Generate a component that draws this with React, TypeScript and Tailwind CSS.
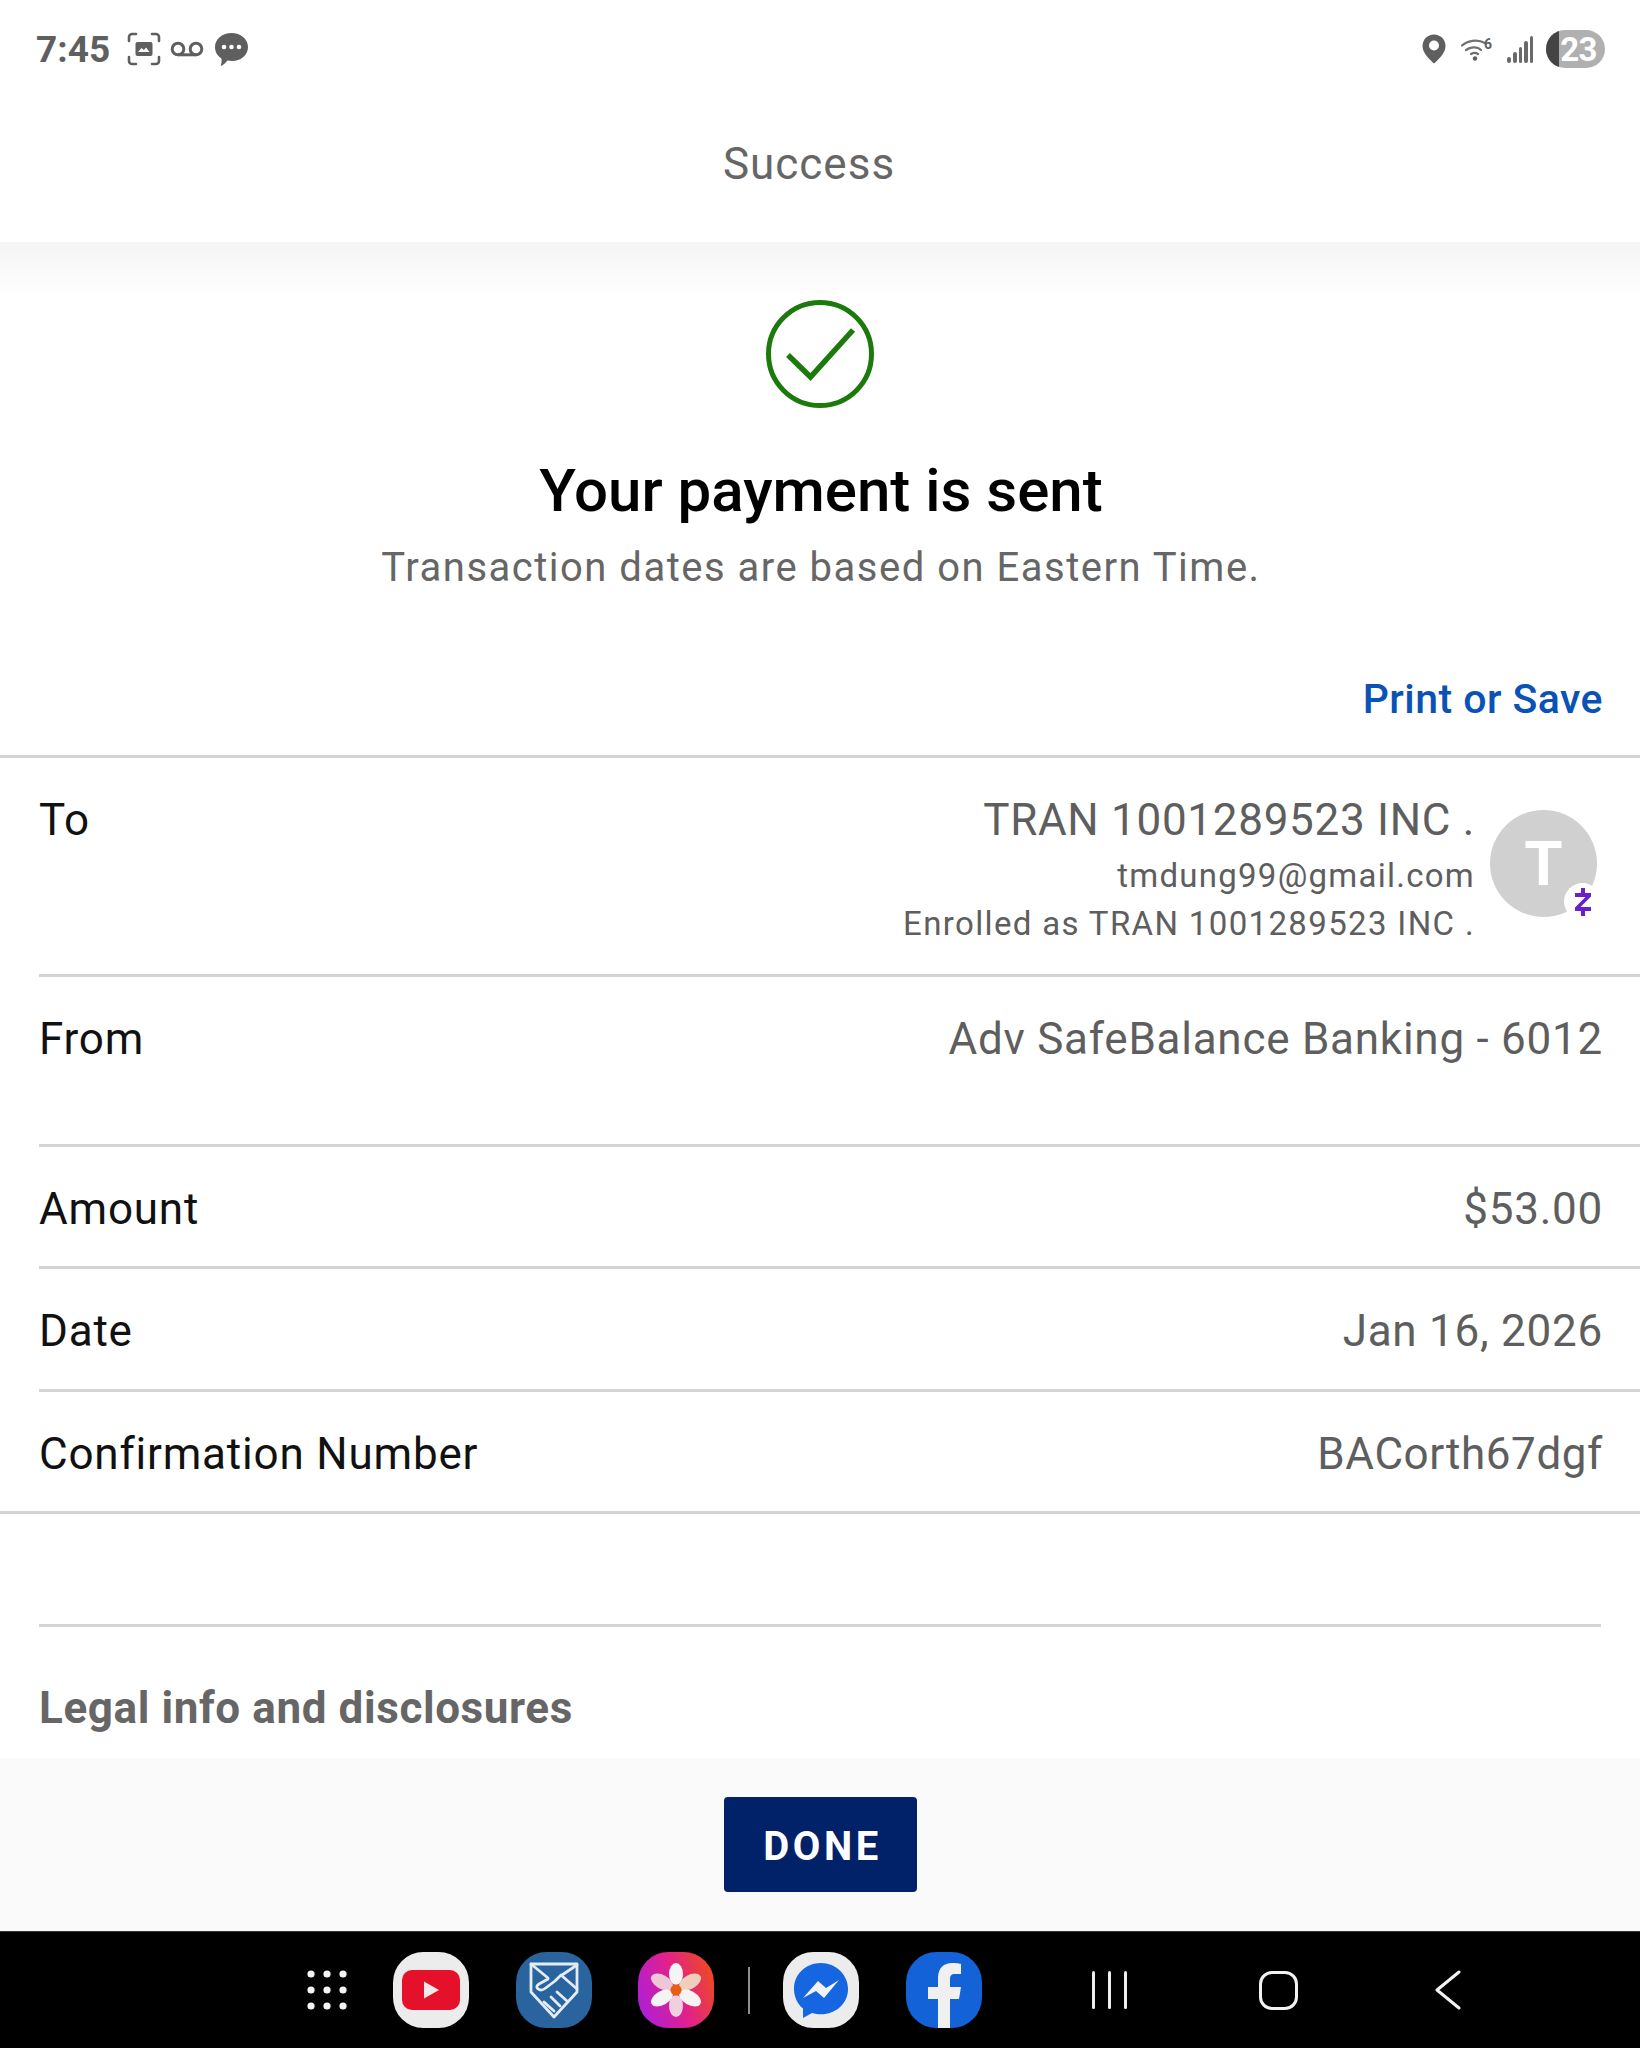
const font = 'font-["Roboto",sans-serif]';

function Row({ label, value, height }: { label: string; value: string; height: string }) {
  return (
    <div className={`${height} ml-[39px] flex shrink-0 justify-between border-b-[3px] border-[#d4d4d4] pr-[37px]`}>
      <span className="text-[44px] leading-[52px] tracking-[0.8px] text-[#111]">{label}</span>
      <span className="text-[44px] leading-[52px] tracking-[0.75px] text-[#5e5e5e]">{value}</span>
    </div>
  );
}

function StatusBar() {
  return (
    <div className="flex h-[98px] shrink-0 items-center pl-[36px] pr-[35px] text-[#5f5f5f]">
      <span className="text-[37px] leading-none font-bold">7:45</span>
      <svg className="ml-[17px]" width="34" height="34" viewBox="0 0 34 34" fill="none">
        <path d="M2 9V5a3 3 0 0 1 3-3h4M25 2h4a3 3 0 0 1 3 3v4M32 25v4a3 3 0 0 1-3 3h-4M9 32H5a3 3 0 0 1-3-3v-4" stroke="#5f5f5f" strokeWidth="2.6" strokeLinecap="round" />
        <rect x="8.5" y="10" width="17" height="14" rx="2" fill="#5f5f5f" />
        <path d="M11 20l3.5-4 2.5 2 2-2.5 3.5 4.5z" fill="#fff" />
      </svg>
      <svg className="ml-[9px]" width="34" height="16" viewBox="0 0 34 16" fill="none">
        <circle cx="8" cy="8" r="5.8" stroke="#5f5f5f" strokeWidth="3" />
        <circle cx="26" cy="8" r="5.8" stroke="#5f5f5f" strokeWidth="3" />
        <path d="M8 13.8h18" stroke="#5f5f5f" strokeWidth="3" />
      </svg>
      <svg className="ml-[10px]" width="35" height="35" viewBox="0 0 35 35">
        <path d="M17.5 1C26.5 1 34 7 34 15s-7 14-16 14c-1.500 0-3-.2-4.500-.5C11.500 31 9 33.500 6.500 34c1-2.500 1.300-5 1-7.500C3.500 24 1 20 1 15 1 7 8.500 1 17.500 1z" fill="#5f5f5f" />
        <circle cx="10" cy="15" r="2.300" fill="#fff" />
        <circle cx="17.500" cy="15" r="2.300" fill="#fff" />
        <circle cx="25" cy="15" r="2.300" fill="#fff" />
      </svg>
      <div className="flex-1" />
      <svg width="24" height="30" viewBox="0 0 24 30">
        <path d="M12 0.500C5.500 0.500 0.500 5.500 0.500 12c0 7 7 13.500 11.500 17.500C16.500 25.500 23.500 19 23.500 12 23.500 5.500 18.500 0.500 12 0.500z" fill="#5f5f5f" />
        <circle cx="12" cy="11.500" r="5" fill="#fff" />
      </svg>
      <svg className="ml-[15px]" width="32" height="24" viewBox="0 0 32 24" fill="none">
        <path d="M1 8.500C6 4 16 1.500 24 6M5 13c4-3 11-4 15 0M10 17c2.500-1.500 5-1.500 7 0" stroke="#707070" strokeWidth="2.200" strokeLinecap="round" />
        <circle cx="14" cy="21.500" r="2.200" fill="#5f5f5f" />
        <text x="23" y="12" fontSize="14" fontWeight="700" fill="#5f5f5f" fontFamily="Roboto, sans-serif">6</text>
      </svg>
      <div className="ml-[14px] flex h-[28px] w-[27px] items-end gap-[2px]">
        <div className="h-[6px] w-[4px] rounded-sm bg-[#6a6a6a]" />
        <div className="h-[11px] w-[3.500px] rounded-sm bg-[#6a6a6a]" />
        <div className="h-[16px] w-[3.500px] rounded-sm bg-[#6a6a6a]" />
        <div className="h-[22px] w-[3.500px] rounded-sm bg-[#6a6a6a]" />
        <div className="h-[27px] w-[3.500px] rounded-sm bg-[#6a6a6a]" />
      </div>
      <div className="relative ml-[12px] flex h-[38px] w-[59px] items-center justify-end overflow-hidden rounded-full bg-[#b0b0b0] pr-[8px]">
        <div className="absolute top-0 bottom-0 left-0 w-[13px] bg-[#444]" />
        <span className="text-[33px] leading-none font-bold tracking-[-0.5px] text-white">23</span>
      </div>
    </div>
  );
}

function Squircle({ className, children }: { className: string; children: React.ReactNode }) {
  return (
    <div className={`flex h-[76px] w-[76px] shrink-0 items-center justify-center overflow-hidden rounded-[40%] ${className}`}>
      {children}
    </div>
  );
}

function NavBar() {
  return (
    <div className="flex h-[117px] shrink-0 items-center border-t border-[#333] bg-black pl-[307px]">
      <svg width="40" height="40" viewBox="0 0 40 40" fill="#f4f4f4">
        {[4, 20, 36].map((x) =>
          [4, 20, 36].map((y) => <circle key={`${x}-${y}`} cx={x} cy={y} r="3.600" />),
        )}
      </svg>
      <Squircle className="ml-[46px] bg-[#ececec]">
        <svg width="58" height="40" viewBox="0 0 58 40">
          <rect width="58" height="40" rx="10" fill="#e5102a" />
          <path d="M22 11.500l15 8.500-15 8.500z" fill="#f3e9e9" />
        </svg>
      </Squircle>
      <Squircle className="ml-[47px] bg-[#29649f]">
        <svg width="54" height="60" viewBox="0 0 54 60" fill="none" stroke="#e3ecf4" strokeWidth="2.800" strokeLinejoin="round" strokeLinecap="round">
          <path d="M4 4h46v28L27 57 4 32z" />
          <path d="M4 4l17 14M50 5L35 15" />
          <path d="M21 19l-9 5c-3 2-3 4 0 5.500 2 1 4 .5 6-1L28 21l6-6 16 14" />
          <path d="M17 42l10 9M24 37l9 9M30 32l10 9" />
        </svg>
      </Squircle>
      <Squircle className="ml-[46px] bg-[linear-gradient(70deg,#a41fe4_0%,#e0208f_50%,#f0500f_100%)]">
        <svg width="54" height="54" viewBox="0 0 54 54">
          <ellipse cx="27" cy="11" rx="7" ry="11" fill="#f4f4f4" />
          <ellipse cx="27" cy="43" rx="7" ry="11" fill="#f0cfe0" />
          <ellipse cx="13" cy="19" rx="7" ry="12" transform="rotate(-60 13 19)" fill="#eec7d6" />
          <ellipse cx="41" cy="19" rx="7" ry="12" transform="rotate(60 41 19)" fill="#efcfbc" />
          <ellipse cx="13" cy="35" rx="7" ry="12" transform="rotate(60 13 35)" fill="#f4f4f4" />
          <ellipse cx="41" cy="35" rx="7" ry="12" transform="rotate(-60 41 35)" fill="#f4f4f4" />
          <circle cx="27" cy="27" r="5.500" fill="#e8600f" />
        </svg>
      </Squircle>
      <div className="ml-[34px] h-[47px] w-[2px] bg-[#8e8e8e]" />
      <Squircle className="ml-[33px] bg-[#ececec]">
        <svg width="58" height="58" viewBox="0 0 58 58">
          <path d="M29 2C14 2 2 13 2 28c0 8 3.500 15 9 19.500V57l9-5c3 1 6 1.300 9 1.300 15 0 27-11 27-25.300S44 2 29 2z" fill="#1566e0" />
          <path d="M11 37l15-17 8 7 13-8-15 18-8-7z" fill="#f2f2f2" />
        </svg>
      </Squircle>
      <Squircle className="ml-[47px] items-end bg-[#1462d8]">
        <svg width="34" height="66" viewBox="0 0 34 66" className="mt-[10px]">
          <path d="M11 66V37H1V25h10v-9C11 6 17 1 25 1c4 0 8 .5 9 1v10h-6c-4 0-5 2-5 5v8h11l-2 12h-9v29z" fill="#f0f0f0" />
        </svg>
      </Squircle>
      <div className="ml-[110px] flex h-[38px] gap-[13px]">
        <div className="w-[3px] rounded-full bg-[#eee]" />
        <div className="w-[3px] rounded-full bg-[#eee]" />
        <div className="w-[3px] rounded-full bg-[#eee]" />
      </div>
      <div className="ml-[132px] h-[39px] w-[39px] rounded-[13px] border-[3px] border-[#f2f2f2]" />
      <svg className="ml-[137px]" width="26" height="40" viewBox="0 0 26 40" fill="none">
        <path d="M24 2L2 20l22 18" stroke="#f2f2f2" strokeWidth="3" strokeLinecap="round" strokeLinejoin="round" />
      </svg>
    </div>
  );
}

export default function App() {
  return (
    <div className={`flex h-[2048px] w-[1640px] flex-col overflow-hidden bg-white ${font}`}>
      <StatusBar />
      <div className="flex h-[144px] shrink-0 items-center justify-center pr-[22px] pb-[12px] text-[44px] tracking-[1px] text-[#666]">
        Success
      </div>
      <div className="h-[58px] shrink-0 bg-gradient-to-b from-[#f5f5f5] to-white" />

      <div className="flex shrink-0 flex-col items-center">
        <svg width="108" height="108" viewBox="0 0 108 108" fill="none">
          <circle cx="54" cy="54" r="51.500" stroke="#1c7a0c" strokeWidth="5" />
          <path d="M22 55l22.500 22L87 30" stroke="#1c7a0c" strokeWidth="5.500" />
        </svg>
        <div className="mt-[47px] pl-[2px] text-[60px] leading-[72px] font-medium text-black">Your payment is sent</div>
        <div className="mt-[16px] pl-[2px] text-[40px] leading-[50px] tracking-[1.500px] text-[#666]">
          Transaction dates are based on Eastern Time.
        </div>
      </div>

      <div className="mt-[81px] shrink-0 pr-[37px] text-right text-[41px] leading-[50px] font-medium tracking-[0.45px] text-[#0a52b5]">
        Print or Save
      </div>

      <div className="mt-[31px] flex h-[219px] shrink-0 items-start justify-between border-t-[3px] border-[#d4d4d4] pr-[43px] pl-[39px]">
        <span className="pt-[36px] text-[44px] leading-[52px] tracking-[0.8px] text-[#111]">To</span>
        <div className="flex items-start gap-[15px] pt-[36px]">
          <div className="flex flex-col items-end">
            <span className="text-[44px] leading-[52px] tracking-[0.7px] text-[#5e5e5e]">TRAN 1001289523 INC .</span>
            <span className="mt-[10px] text-[33px] leading-[40px] tracking-[1.25px] text-[#5e5e5e]">tmdung99@gmail.com</span>
            <span className="mt-[8px] text-[33px] leading-[40px] tracking-[1.35px] text-[#5e5e5e]">Enrolled as TRAN 1001289523 INC .</span>
          </div>
          <div className="relative mt-[16px] flex h-[107px] w-[107px] items-center justify-center rounded-full bg-[#d0d0d0]">
            <span className="text-[62px] leading-none font-bold text-white">T</span>
            <div className="absolute top-[73px] left-[74px] flex h-[37px] w-[37px] items-center justify-center rounded-full bg-white">
              <svg width="18" height="30" viewBox="0 0 18 30" fill="none">
                <path d="M9 1v5M9 24v5" stroke="#6a1fc9" strokeWidth="4" />
                <path d="M1 6h16v3.500L6.500 20H17v4H1v-3.500L11.500 10H1z" fill="#6a1fc9" />
              </svg>
            </div>
          </div>
        </div>
      </div>

      <div className="ml-[39px] h-[3px] shrink-0 bg-[#d4d4d4]" />
      <Row label="From" value="Adv SafeBalance Banking - 6012" height="h-[170px] pt-[36px]" />
      <Row label="Amount" value="$53.00" height="h-[122px] pt-[36px]" />
      <Row label="Date" value="Jan 16, 2026" height="h-[123px] pt-[36px]" />

      <div className="flex h-[122px] shrink-0 justify-between border-b-[3px] border-[#d4d4d4] pt-[36px] pr-[37px] pl-[39px]">
        <span className="text-[44px] leading-[52px] tracking-[0.8px] text-[#111]">Confirmation Number</span>
        <span className="text-[44px] leading-[52px] tracking-[0.6px] text-[#5e5e5e]">BACorth67dgf</span>
      </div>

      <div className="mx-[39px] mt-[110px] h-[3px] shrink-0 bg-[#d4d4d4]" />
      <div className="mt-[55px] ml-[39px] shrink-0 text-[44px] leading-[52px] font-bold tracking-[0.6px] text-[#666]">
        Legal info and disclosures
      </div>

      <div className="mt-[24px] flex flex-1 items-start justify-center bg-[#fafafa] pt-[39px]">
        <button className="flex h-[95px] w-[193px] items-center justify-center rounded-[4px] bg-[#012169] pt-[4px] pl-[5px] text-[40px] font-bold tracking-[3.500px] text-white">
          DONE
        </button>
      </div>
      <NavBar />
    </div>
  );
}
